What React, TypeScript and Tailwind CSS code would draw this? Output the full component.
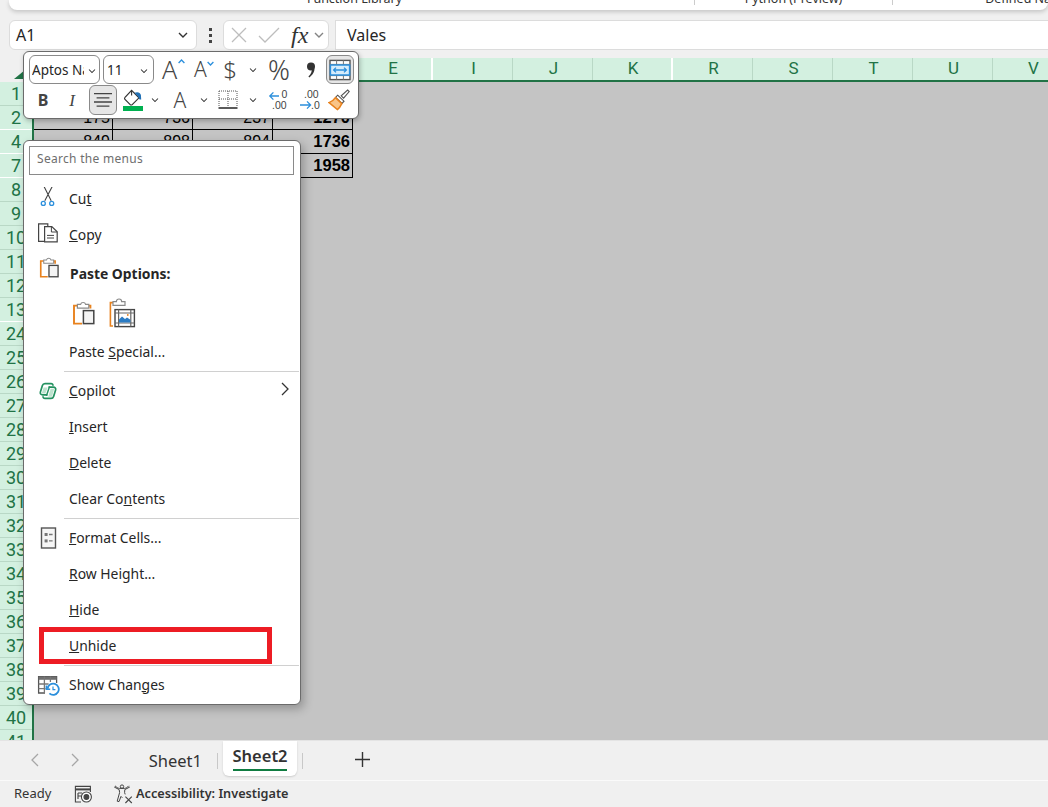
import type { ReactNode } from "react";

const ui = "font-['Noto_Sans','Open_Sans',sans-serif]";
const narrow = "font-['Liberation_Sans_Narrow','Roboto',sans-serif]";

const rows = [1, 2, 4, 7, 8, 9, 10, 11, 12, 13, 24, 25, 26, 27, 28, 29, 30, 31, 32, 33, 34, 35, 36, 37, 38, 39, 40, 41];
const hiddenAfter = [2, 4, 7, 13];
const cols = ["E", "I", "J", "K", "R", "S", "T", "U", "V"];
const table = [
  ["Vales", "Q1", "Q2", "Total"],
  ["175", "736", "237", "1270"],
  ["849", "898", "894", "1736"],
  ["312", "756", "890", "1958"],
];

function Chev({ className = "" }: { className?: string }) {
  return (
    <svg width="10" height="6" viewBox="0 0 10 6" className={className} fill="none" stroke="#333" strokeWidth="1.4">
      <path d="M1 1l4 4 4-4" />
    </svg>
  );
}

function ScissorsIcon() {
  return (
    <svg width="24" height="24" viewBox="0 0 24 24" fill="none">
      <path d="M8 -.6l7.2 14.4M16.3 -.6L8.8 13.8" stroke="#444" strokeWidth="1.1" />
      <circle cx="7.3" cy="16.4" r="2" stroke="#2b8fdc" strokeWidth="1.3" />
      <circle cx="15.7" cy="16.4" r="2" stroke="#2b8fdc" strokeWidth="1.3" />
    </svg>
  );
}

function CopyIcon() {
  return (
    <svg width="24" height="24" viewBox="0 0 24 24" fill="none" stroke="#444" strokeWidth="1.2">
      <path d="M8 18.4H2.6V.8h9.2v2.6" />
      <path d="M8.6 3.6h7.2l5.4 5.2v10H8.6z" fill="#fff" />
      <path d="M15.4 3.8v5.2h5.6M11 12.4h7M11 15h7" strokeWidth="1" />
    </svg>
  );
}

function PasteIcon({ s = 24 }: { s?: number }) {
  return (
    <svg width={s} height={s} viewBox="0 0 24 24" fill="none">
      <path d="M10 22.6H2V4.6h4M16 4.6h2.4v3" stroke="#e8821e" strokeWidth="1.9" />
      <path d="M5.4 7.2V3.4h3.2a2.6 2.6 0 015 0h3.2v3.8z" fill="#fff" stroke="#8a8a8a" strokeWidth="1.2" />
      <rect x="11.4" y="9.6" width="10.4" height="13" fill="#f4f4f4" stroke="#444" strokeWidth="1.5" />
    </svg>
  );
}

function PastePictureIcon() {
  return (
    <svg width="28" height="30" viewBox="0 0 28 30" fill="none">
      <path d="M4 28H1.4V4.6h3M13 4.6h2" stroke="#e8821e" strokeWidth="1.6" />
      <path d="M4 7.4V3.6h3.4a2.6 2.6 0 015.2 0H16v3.8z" fill="#fff" stroke="#8a8a8a" strokeWidth="1.2" />
      <rect x="6" y="11.6" width="19.4" height="17" fill="#fff" stroke="#444" strokeWidth="1.4" />
      <path d="M6 15h19.4M6 25h19.4M9.6 11.6v17M21.8 11.6v17" stroke="#666" strokeWidth="1.2" />
      <path d="M10 24.6v-3.2l3-3 3 2.6 2-1.6 3.4 2.4v2.8z" fill="#2b7cc4" />
      <circle cx="18.8" cy="17" r="0.9" fill="#e8821e" />
    </svg>
  );
}

function CopilotIcon() {
  return (
    <svg width="24" height="24" viewBox="0 0 24 24" fill="none" stroke="#23915f" strokeWidth="1.7">
      <path d="M11.5 15.8H6.6c-1.7 0-2.7-1.3-2.2-2.8l2-6.4C6.8 5.3 7.9 4.6 9 4.6h6c1.4 0 2.2 1 1.8 2.2" />
      <path d="M12.5 8.2h4.9c1.7 0 2.7 1.3 2.2 2.8l-2 6.4c-.4 1.3-1.5 2-2.6 2H9c-1.4 0-2.2-1-1.8-2.2" />
      <path d="M13.6 7.4L10.4 16.8" strokeWidth="1.4" />
      <path d="M7.6 8.4h4l-2.2 6H5.8z" fill="#bde3ce" stroke="none" />
      <path d="M14.6 9.8h3.6l-2.2 8h-3.8z" fill="#bde3ce" stroke="none" />
    </svg>
  );
}

function FormatCellsIcon() {
  return (
    <svg width="24" height="24" viewBox="0 0 24 24" fill="none">
      <rect x="5.5" y="2" width="14" height="20" fill="#f6f6f6" stroke="#555" strokeWidth="1.4" />
      <rect x="8.6" y="7" width="3" height="3" fill="#777" />
      <rect x="8.6" y="13.4" width="3" height="3" fill="#777" />
      <path d="M13 8.5h3.6M13 14.9h3.6" stroke="#777" strokeWidth="1.3" />
    </svg>
  );
}

function ShowChangesIcon() {
  return (
    <svg width="24" height="24" viewBox="0 0 24 24" fill="none">
      <path d="M9 20H2.6V3.6h18V10" stroke="#555" strokeWidth="1.3" />
      <path d="M2.6 3.6h18v3.2H2.6z" fill="#6f6f6f" />
      <path d="M2.6 11h10M2.6 15.6h7M8.4 3.6V20M14.4 3.6V9" stroke="#777" strokeWidth="1.3" />
      <path d="M11.6 15.8a5.6 5.6 0 111.8 4.6" stroke="#2b8fdc" strokeWidth="1.8" />
      <path d="M10.4 12.4v3.8h3.8" stroke="#2b8fdc" strokeWidth="1.6" />
      <path d="M17 13.4v3.2h2.4" stroke="#2b8fdc" strokeWidth="1.2" />
    </svg>
  );
}

function AlignIcon() {
  return (
    <svg width="20" height="20" viewBox="0 0 20 20" stroke="#444" strokeWidth="1.3">
      <path d="M1 3.6h18M3.6 7.8h12.8M1 12h18M3.6 16.2h12.8" />
    </svg>
  );
}

function MergeIcon() {
  return (
    <svg width="22" height="22" viewBox="0 0 22 22" fill="none">
      <rect x="1" y="1.4" width="20" height="19.2" stroke="#555" strokeWidth="1.4" fill="#fff" />
      <path d="M1 5.4h20M1 16.6h20M7.6 1.4v4M14.4 1.4v4M7.6 16.6v4M14.4 16.6v4" stroke="#777" strokeWidth="1" />
      <rect x="1.4" y="6" width="19.2" height="10" fill="#d6ecfb" stroke="#2b8fdc" strokeWidth="1.5" />
      <path d="M4.6 11h12.8M7 8.6L4.6 11 7 13.4M15 8.6l2.4 2.4-2.4 2.4" stroke="#2b8fdc" strokeWidth="1.3" />
    </svg>
  );
}

function FillIcon() {
  return (
    <svg width="22" height="22" viewBox="0 0 22 22" fill="none">
      <path d="M9.6 1.4l7.4 7.4-6.8 6.8a1.4 1.4 0 01-2 0L3 10.4a1.4 1.4 0 010-2z" fill="#fff" stroke="#333" strokeWidth="1.2" />
      <path d="M9.6 1.4v5" stroke="#333" strokeWidth="1.1" />
      <path d="M12.5 3.8c3-1.4 5.8-.4 6.4 2.2l.3 4.4h-1.7L16 7.4z" fill="#1f6fb4" />
      <rect x="1" y="17" width="20" height="5" fill="#00b050" />
    </svg>
  );
}

function BordersIcon() {
  return (
    <svg width="20" height="20" viewBox="0 0 20 20" fill="none" stroke="#555" strokeWidth="1" strokeDasharray="1 1">
      <path d="M1 1h18M1 1v16M19 1v16M10 1v16M1 9h18" />
      <path d="M.5 18h19" strokeDasharray="none" strokeWidth="1.6" stroke="#333" />
    </svg>
  );
}

function DecimalIcon({ increase }: { increase?: boolean }) {
  return (
    <svg width="22" height="22" viewBox="0 0 22 22" fill="none" fontFamily="Liberation Sans, sans-serif" fontSize="10.5">
      {increase ? (
        <>
          <path d="M11 7H2M5.4 3.4L1.8 7l3.6 3.6" stroke="#2b8fdc" strokeWidth="1.3" />
          <text x="13.4" y="9" fill="#444" stroke="none">0</text>
          <text x="4" y="20" fill="#444" stroke="none">.00</text>
        </>
      ) : (
        <>
          <text x="5" y="9" fill="#444" stroke="none">.00</text>
          <path d="M1 16h10M8 12.4l3.6 3.6L8 19.6" stroke="#2b8fdc" strokeWidth="1.3" />
          <text x="12" y="20" fill="#444" stroke="none">.0</text>
        </>
      )}
    </svg>
  );
}

function BrushIcon() {
  return (
    <svg width="22" height="22" viewBox="0 0 22 22" fill="none">
      <path d="M19.6 1l1.6 1.6-5.6 6.6-2.4-2.4z" fill="#fff" stroke="#555" strokeWidth="1.1" />
      <path d="M9.6 6.2l6.4 6-2 2.2-6.4-6z" fill="#fff" stroke="#555" strokeWidth="1.1" />
      <path d="M7.4 8.6l6.4 6c-1.2 2.6-2.4 4.4-4.4 6L1 13.6c2.6-.8 4.8-2.6 6.4-5z" fill="#f9c487" stroke="#e8821e" strokeWidth="1.5" />
    </svg>
  );
}

function MacroIcon() {
  return (
    <svg width="20" height="20" viewBox="0 0 20 20" fill="none" stroke="#444" strokeWidth="1.1">
      <path d="M8 18H2.4V2.4h15V8" />
      <path d="M2.4 5.4h15" strokeWidth="2" />
      <path d="M5 9h4M5 9v6M5 12h3" />
      <circle cx="13.4" cy="13" r="5" fill="#fff" />
      <circle cx="13.4" cy="13" r="2.4" fill="#444" />
    </svg>
  );
}

function AccessibilityIcon() {
  return (
    <svg width="20" height="20" viewBox="0 0 20 20" fill="none" stroke="#444" strokeWidth="1">
      <circle cx="9" cy="2.6" r="1.7" />
      <path d="M1.2 3l5 2.6.4 3-2.4 8.6 1.8.4 2-5.2 1.4 1.4M16.8 3l-5 2.6-.2 3 .6 1.8M2 1.8c1.6 1.6 3 2.4 4.4 2.6h5.2c1.4-.2 2.8-1 4.2-2.6" />
      <path d="M12.4 12.6l6.4 6.4M18.8 12.6l-6.4 6.4" strokeWidth="1.1" />
    </svg>
  );
}

function ToolCell({ w, children, active }: { w: string; children: ReactNode; active?: boolean }) {
  return (
    <div className={`${w} flex h-full shrink-0 items-center justify-center ${active ? "rounded-md border border-[#8a8a8a] bg-[#e6e6e6]" : ""}`}>
      {children}
    </div>
  );
}

function Toolbar() {
  return (
    <div className={`${ui} absolute left-[23px] top-[51px] h-[68px] w-[336px] rounded-md border border-[#6b6b6b] bg-white pl-[5px] pt-[3px] text-[#444] shadow-[1px_2px_5px_rgba(0,0,0,0.25)]`}>
      <div className="flex h-[29px] items-center">
        <div className="flex h-full w-[71px] items-center justify-between rounded-md border border-[#8a8a8a] pl-[2px] pr-[2px] pt-[2px]">
          <span className="w-[52px] overflow-hidden whitespace-nowrap text-[13.5px] text-[#262626]">Aptos Narrow</span>
          <Chev className="scale-75" />
        </div>
        <div className="ml-[3px] flex h-full w-[51px] items-center justify-between rounded-md border border-[#8a8a8a] pl-[3px] pr-[4px] pt-[2px]">
          <span className="text-[13.5px] text-[#262626]">11</span>
          <Chev className="scale-75" />
        </div>
        <ToolCell w="w-[34px]">
          <span className="relative -ml-[3px] text-[25px] font-light leading-none text-[#444]">
            A
            <svg width="7" height="5" viewBox="0 0 7 5" className="absolute -right-[8px] top-[2px]" fill="none" stroke="#2b8fdc" strokeWidth="1.3">
              <path d="M.6 4l2.9-3 2.9 3" />
            </svg>
          </span>
        </ToolCell>
        <ToolCell w="w-[28px]">
          <span className="relative -ml-[3px] text-[21px] font-light leading-none text-[#444]">
            A
            <svg width="7" height="5" viewBox="0 0 7 5" className="absolute -right-[7px] top-[2px]" fill="none" stroke="#2b8fdc" strokeWidth="1.3">
              <path d="M.6 1l2.9 3 2.9-3" />
            </svg>
          </span>
        </ToolCell>
        <ToolCell w="w-[28px]">
          <span className="text-[24px] font-light leading-none">$</span>
        </ToolCell>
        <ToolCell w="w-[18px]">
          <Chev className="scale-75" />
        </ToolCell>
        <ToolCell w="w-[34px]">
          <span className="text-[27px] font-light leading-none">%</span>
        </ToolCell>
        <ToolCell w="w-[30px]">
          <svg width="10" height="16" viewBox="0 0 10 16" fill="#333">
            <circle cx="5" cy="4.4" r="4" />
            <path d="M6 6c3.6-1.8 3.6 4.6-2.6 9.4L2.4 14.6C5 12 6 9.6 6 6z" />
          </svg>
        </ToolCell>
        <ToolCell w="w-[28px]" active>
          <MergeIcon />
        </ToolCell>
      </div>
      <div className="mt-px flex h-[30px] items-center">
        <ToolCell w="w-[28px]">
          <span className="text-[16px] font-bold leading-none">B</span>
        </ToolCell>
        <ToolCell w="w-[30px]">
          <span className="font-['Liberation_Serif',serif] text-[17px] italic leading-none">I</span>
        </ToolCell>
        <div className="w-[2px]" />
        <ToolCell w="w-[28px]" active>
          <AlignIcon />
        </ToolCell>
        <div className="w-[2px]" />
        <ToolCell w="w-[27px]">
          <FillIcon />
        </ToolCell>
        <ToolCell w="w-[18px]">
          <Chev className="scale-75" />
        </ToolCell>
        <ToolCell w="w-[32px]">
          <span className="text-[21px] font-light leading-none">A</span>
        </ToolCell>
        <ToolCell w="w-[16px]">
          <Chev className="scale-75" />
        </ToolCell>
        <ToolCell w="w-[32px]">
          <BordersIcon />
        </ToolCell>
        <ToolCell w="w-[18px]">
          <Chev className="scale-75" />
        </ToolCell>
        <ToolCell w="w-[34px]">
          <DecimalIcon increase />
        </ToolCell>
        <ToolCell w="w-[28px]">
          <DecimalIcon />
        </ToolCell>
        <ToolCell w="w-[30px]">
          <BrushIcon />
        </ToolCell>
      </div>
    </div>
  );
}

function Item({ icon, children, arrow }: { icon?: ReactNode; children: ReactNode; arrow?: boolean }) {
  return (
    <div className="flex h-[36px] items-center pl-[12px] pr-[10px]">
      <div className="flex h-[24px] w-[33px] shrink-0 items-center">{icon}</div>
      <span className="flex-1 whitespace-nowrap">{children}</span>
      {arrow && (
        <svg width="10" height="14" viewBox="0 0 10 14" fill="none" stroke="#333" strokeWidth="1.3" className="-mt-[4px]">
          <path d="M2 1l6 6-6 6" />
        </svg>
      )}
    </div>
  );
}

function Sep() {
  return <div className="my-px ml-[40px] mr-px h-px bg-[#d0d0d0]" />;
}

function ContextMenu() {
  return (
    <div className={`${ui} absolute left-[23px] top-[140px] w-[278px] rounded-md border border-[#6b6b6b] bg-white pb-px pt-[5px] text-[13.9px] text-[#262626] shadow-[3px_4px_10px_rgba(0,0,0,0.25)]`}>
      <div className="mb-[6px] ml-[5px] mr-[6px] flex h-[29px] items-center border border-[#8a8a8a] pb-[3px] pl-[7px] text-[12px] tracking-[0.3px] text-[#6e6e6e]">
        Search the menus
      </div>
      <Item icon={<ScissorsIcon />}>Cu<u>t</u></Item>
      <Item icon={<CopyIcon />}><u>C</u>opy</Item>
      <div className="mt-[3px] flex h-[36px] items-center pl-[12px] font-bold">
        <div className="ml-[3px] mt-px h-[24px] w-[31px] shrink-0 self-start">
          <PasteIcon s={21} />
        </div>
        <span>Paste Options:</span>
      </div>
      <div className="flex h-[42px] items-center gap-[13px] pl-[48px]">
        <PasteIcon />
        <PastePictureIcon />
      </div>
      <Item>Paste <u>S</u>pecial...</Item>
      <Sep />
      <Item icon={<CopilotIcon />} arrow><u>C</u>opilot</Item>
      <Item><u>I</u>nsert</Item>
      <Item><u>D</u>elete</Item>
      <Item>Clear Co<u>n</u>tents</Item>
      <Sep />
      <Item icon={<FormatCellsIcon />}><u>F</u>ormat Cells...</Item>
      <Item><u>R</u>ow Height...</Item>
      <Item><u>H</u>ide</Item>
      <Item><u>U</u>nhide</Item>
      <Sep />
      <Item icon={<ShowChangesIcon />}>Show Chan<u>g</u>es</Item>
    </div>
  );
}

export default function App() {
  return (
    <div className={`${ui} relative flex h-[807px] w-[1048px] flex-col overflow-hidden bg-[#f0f0f0]`}>
      {/* ribbon bottom edge */}
      <div className="ml-[9px] flex h-[10px] shrink-0 items-end overflow-hidden rounded-b-lg bg-white pb-[5px] text-[12.5px] leading-none text-[#333] shadow-[0_2px_4px_rgba(0,0,0,0.18)]">
        <div className="flex w-[685px] shrink-0 justify-center pl-[6px]">Function Library</div>
        <div className="flex w-[198px] shrink-0 justify-center border-l border-[#ccc]">Python (Preview)</div>
        <div className="flex w-[276px] shrink-0 justify-center border-l border-[#ccc]">Defined Names</div>
      </div>

      {/* formula bar */}
      <div className="mb-[8px] mt-[10px] flex h-[30px] shrink-0 items-center text-[16px] text-[#262626]">
        <div className="ml-[9px] flex h-full w-[188px] items-center justify-between rounded-md border border-[#dcdcdc] bg-white pl-[6px] pr-[8px]">
          A1
          <Chev />
        </div>
        <div className="flex w-[26px] flex-col items-center gap-[3px]">
          <div className="h-[3px] w-[3px] bg-[#444]" />
          <div className="h-[3px] w-[3px] bg-[#444]" />
          <div className="h-[3px] w-[3px] bg-[#444]" />
        </div>
        <div className="flex h-full w-[106px] items-center rounded-md border border-[#dcdcdc] bg-white pl-[7px]">
          <svg width="16" height="16" viewBox="0 0 16 16" stroke="#bdbdbd" strokeWidth="1.3">
            <path d="M1 1l14 14M15 1L1 15" />
          </svg>
          <svg width="22" height="16" viewBox="0 0 22 16" fill="none" stroke="#bdbdbd" strokeWidth="1.3" className="ml-[11px]">
            <path d="M1 9l6 6L21 1" />
          </svg>
          <span className="ml-[11px] font-['Liberation_Serif',serif] text-[24px] italic leading-none text-[#333]">fx</span>
          <Chev className="ml-[6px] opacity-60" />
        </div>
        <div className="ml-[6px] flex h-full flex-1 items-center border-y border-l border-[#dcdcdc] bg-white pl-[11px]">Vales</div>
      </div>

      {/* column headers */}
      <div className="flex h-[24px] shrink-0">
        <div className="relative w-[34px] shrink-0">
          <div className="absolute bottom-[3px] right-[9px] h-0 w-0 border-b-[9px] border-l-[11px] border-b-[#217346] border-l-transparent" />
        </div>
        <div className={`${narrow} flex flex-1 border-b-2 border-[#217346] bg-[#d3f0e0] text-[17px] text-[#217346]`}>
          <div className="w-[319px] shrink-0" />
          {cols.map((c) => (
            <div
              key={c}
              className={`flex w-[80px] shrink-0 items-center justify-center border-r pl-[2px] ${c === "E" || c === "K" ? "border-r-2 border-white" : "border-[#b9d8c6]"}`}
            >
              {c}
            </div>
          ))}
        </div>
      </div>

      {/* sheet area */}
      <div className="flex min-h-0 flex-1 overflow-hidden">
        <div className={`${narrow} w-[34px] shrink-0 border-r-2 border-[#217346] bg-[#d3f0e0] text-[18px] text-[#217346]`}>
          {rows.map((r) => (
            <div
              key={r}
              className={`flex h-[24px] items-center justify-center overflow-hidden border-b pt-px leading-none ${hiddenAfter.includes(r) ? "border-white" : "border-[#b9d8c6]"}`}
            >
              {r}
            </div>
          ))}
        </div>
        <div className="flex-1 bg-[#c4c4c4] font-['Liberation_Sans',sans-serif] text-[16px] leading-none text-black">
          {table.map((row, i) => (
            <div key={i} className="grid h-[24px] w-[319px] grid-cols-[79px_80px_80px_80px] grid-rows-[24px]">
              {row.map((cell, j) => (
                <div
                  key={j}
                  className={`flex items-center justify-end border-b border-r border-black pr-[2px] ${j === 3 ? "text-[16.5px] font-bold" : ""}`}
                >
                  {cell}
                </div>
              ))}
            </div>
          ))}
        </div>
      </div>

      {/* sheet tabs */}
      <div className="flex h-[40px] shrink-0 border-t border-[#e4e4e4] text-[16.5px] text-[#333]">
        <div className="flex w-[120px] items-center pb-[2px] pl-[30px]">
          <svg width="10" height="16" viewBox="0 0 10 16" fill="none" stroke="#a6a6a6" strokeWidth="1.3">
            <path d="M8 2L2 8l6 6" />
          </svg>
          <svg width="10" height="16" viewBox="0 0 10 16" fill="none" stroke="#a6a6a6" strokeWidth="1.3" className="ml-[30px]">
            <path d="M2 2l6 6-6 6" />
          </svg>
        </div>
        <div className="flex h-[34px] w-[97px] items-center justify-end pr-[15px] pt-[6px]">Sheet1</div>
        <div className="my-auto h-[16px] w-px bg-[#c8c8c8]" />
        <div className="ml-[5px] flex h-[35px] w-[74px] flex-col items-center rounded-b-md bg-white font-semibold shadow-[0_1px_2px_rgba(0,0,0,0.15)]">
          <span className="mt-[2px] leading-[26px]">Sheet2</span>
          <div className="h-[2px] w-[54px] bg-[#107c41]" />
        </div>
        <div className="my-auto ml-[5px] h-[16px] w-px bg-[#c8c8c8]" />
        <div className="ml-[52px] flex items-center pb-[3px]">
          <svg width="15" height="15" viewBox="0 0 15 15" stroke="#333" strokeWidth="1.4">
            <path d="M7.5 0v15M0 7.5h15" />
          </svg>
        </div>
      </div>

      {/* status bar */}
      <div className="flex h-[27px] shrink-0 items-center border-t border-[#fafafa] bg-[#f0f0f0] pl-[14px] text-[13px] text-[#333]">
        <span className="w-[59px]">Ready</span>
        <MacroIcon />
        <span className="ml-[20px]">
          <AccessibilityIcon />
        </span>
        <span className="ml-[3px] text-[12.7px] font-semibold">Accessibility: Investigate</span>
      </div>

      <Toolbar />
      <ContextMenu />
      <div className="absolute left-[39px] top-[627px] h-[37px] w-[233px] border-[5px] border-[#ed1c24]" />
    </div>
  );
}
